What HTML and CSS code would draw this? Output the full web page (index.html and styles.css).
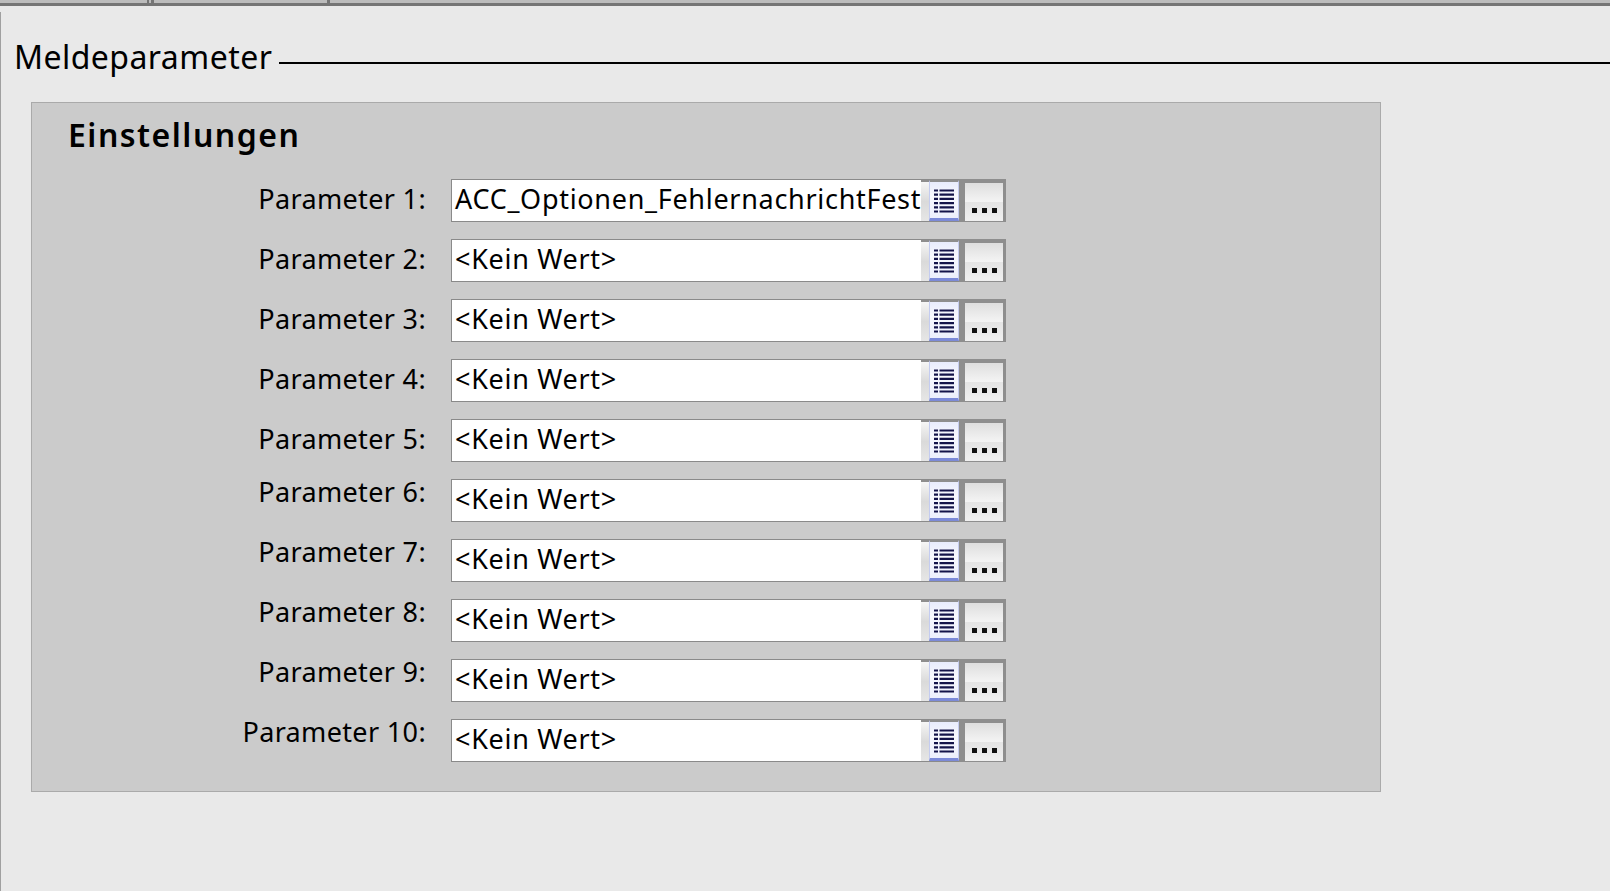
FILE: index.html
```html
<!DOCTYPE html>
<html lang="de">
<head>
    <meta charset="UTF-8">
    <title>Meldeparameter</title>
    <link rel="stylesheet" href="styles.css">
</head>
<body>
    <svg class="defs" width="0" height="0">
        <symbol id="list-icon" viewBox="0 0 20 24">
            <path d="M0 1.5h4M5.500 1.500h14.500M0 5.700h4M5.500 5.700h14.500M0 9.900h4M5.500 9.900h14.500M0 14.100h4M5.500 14.100h14.500M0 18.300h4M5.500 18.300h14.500M0 22.500h4M5.500 22.500h14.500" stroke="#14144a" stroke-width="2.200"/>
        </symbol>
    </svg>

    <div class="topbar">
        <div class="tab tab-first"></div>
        <div class="tab tab-second"></div>
    </div>
    <div class="content">
        <div class="section-title">
            <span>Meldeparameter</span>
            <div class="title-line"></div>
        </div>
        <div class="panel">
            <h2>Einstellungen</h2>
            <div class="rows">
                <div class="row">
                    <label>Parameter 1:</label>
                    <div class="field"><span class="value">ACC_Optionen_FehlernachrichtFest</span><div class="gutter"></div><div class="list-btn"><svg width="20" height="24"><use href="#list-icon"/></svg></div></div>
                    <div class="more-btn"><span></span><span></span><span></span></div>
                </div>
                <div class="row">
                    <label>Parameter 2:</label>
                    <div class="field"><span class="value">&lt;Kein Wert&gt;</span><div class="gutter"></div><div class="list-btn"><svg width="20" height="24"><use href="#list-icon"/></svg></div></div>
                    <div class="more-btn"><span></span><span></span><span></span></div>
                </div>
                <div class="row">
                    <label>Parameter 3:</label>
                    <div class="field"><span class="value">&lt;Kein Wert&gt;</span><div class="gutter"></div><div class="list-btn"><svg width="20" height="24"><use href="#list-icon"/></svg></div></div>
                    <div class="more-btn"><span></span><span></span><span></span></div>
                </div>
                <div class="row">
                    <label>Parameter 4:</label>
                    <div class="field"><span class="value">&lt;Kein Wert&gt;</span><div class="gutter"></div><div class="list-btn"><svg width="20" height="24"><use href="#list-icon"/></svg></div></div>
                    <div class="more-btn"><span></span><span></span><span></span></div>
                </div>
                <div class="row">
                    <label>Parameter 5:</label>
                    <div class="field"><span class="value">&lt;Kein Wert&gt;</span><div class="gutter"></div><div class="list-btn"><svg width="20" height="24"><use href="#list-icon"/></svg></div></div>
                    <div class="more-btn"><span></span><span></span><span></span></div>
                </div>
                <div class="row row-high">
                    <label>Parameter 6:</label>
                    <div class="field"><span class="value">&lt;Kein Wert&gt;</span><div class="gutter"></div><div class="list-btn"><svg width="20" height="24"><use href="#list-icon"/></svg></div></div>
                    <div class="more-btn"><span></span><span></span><span></span></div>
                </div>
                <div class="row row-high">
                    <label>Parameter 7:</label>
                    <div class="field"><span class="value">&lt;Kein Wert&gt;</span><div class="gutter"></div><div class="list-btn"><svg width="20" height="24"><use href="#list-icon"/></svg></div></div>
                    <div class="more-btn"><span></span><span></span><span></span></div>
                </div>
                <div class="row row-high">
                    <label>Parameter 8:</label>
                    <div class="field"><span class="value">&lt;Kein Wert&gt;</span><div class="gutter"></div><div class="list-btn"><svg width="20" height="24"><use href="#list-icon"/></svg></div></div>
                    <div class="more-btn"><span></span><span></span><span></span></div>
                </div>
                <div class="row row-high">
                    <label>Parameter 9:</label>
                    <div class="field"><span class="value">&lt;Kein Wert&gt;</span><div class="gutter"></div><div class="list-btn"><svg width="20" height="24"><use href="#list-icon"/></svg></div></div>
                    <div class="more-btn"><span></span><span></span><span></span></div>
                </div>
                <div class="row row-high">
                    <label>Parameter 10:</label>
                    <div class="field"><span class="value">&lt;Kein Wert&gt;</span><div class="gutter"></div><div class="list-btn"><svg width="20" height="24"><use href="#list-icon"/></svg></div></div>
                    <div class="more-btn"><span></span><span></span><span></span></div>
                </div>
            </div>
        </div>
    </div>
</body>
</html>
```

FILE: styles.css
```css
* {
    margin: 0;
    padding: 0;
    box-sizing: border-box;
}

html, body {
    height: 100%;
    overflow: hidden;
}

body {
    font-family: "Noto Sans", "Open Sans", sans-serif;
    background-color: #e9e9e9;
    color: #000;
}

.defs {
    display: block;
    height: 0;
}

.topbar {
    display: flex;
    height: 6px;
    background-color: #bcbcbc;
    border-bottom: 3px solid #757575;
}

.tab {
    height: 3px;
}

.tab-first {
    width: 149px;
    border-right: 2px solid #757575;
}

.tab-second {
    width: 179px;
    margin-left: 2px;
    border-left: 3px solid #757575;
    border-right: 3px solid #757575;
}

.content {
    margin-top: 6px;
    height: 879px;
    border-left: 1px solid #a0a0a0;
    padding: 22px 0 0 13px;
}

.section-title {
    display: flex;
    align-items: center;
    gap: 7px;
    height: 46px;
    font-size: 32px;
    letter-spacing: 0.45px;
    line-height: 46px;
}

.title-line {
    flex: 1;
    height: 2px;
    margin-top: 12px;
    background-color: #000;
}

.panel {
    width: 1350px;
    height: 690px;
    margin-top: 22px;
    margin-left: 17px;
    padding: 12px 0 0 36px;
    background-color: #cbcbcb;
    border: 1px solid #aaa;
}

h2 {
    font-size: 32px;
    font-weight: 600;
    letter-spacing: 1.5px;
    line-height: 40px;
}

.rows {
    display: flex;
    flex-direction: column;
    gap: 17px;
    margin-top: 24px;
}

.row {
    display: flex;
    height: 43px;
    margin-left: -36px;
}

label {
    width: 395px;
    padding-right: 1px;
    font-size: 27px;
    letter-spacing: 0.35px;
    line-height: 40px;
    text-align: right;
    white-space: nowrap;
}

.row-high label {
    line-height: 26px;
}

.field {
    display: flex;
    width: 508px;
    height: 43px;
    margin-left: 24px;
    background-color: #fff;
    border: 1px solid #8a8a8a;
    border-right: none;
}

.value {
    flex: 1;
    overflow: hidden;
    padding-left: 3px;
    font-size: 27px;
    letter-spacing: 0.7px;
    line-height: 37px;
    white-space: nowrap;
}

.gutter {
    width: 8px;
    background: linear-gradient(#f6f6f6, #dadada 50%, #e6e6e6);
    border-top: 2px solid #8e8e8e;
}

.list-btn {
    display: flex;
    justify-content: center;
    align-items: center;
    width: 30px;
    padding-top: 2px;
    background: linear-gradient(#e8ecfd, #f8f9ff 40%, #eceffc);
    border-top: 2px solid #8e8e8e;
    border-left: 1px solid #c4ccf0;
    border-right: 1px solid #c4ccf0;
    border-bottom: 3px solid #7c8ad8;
}

.more-btn {
    display: flex;
    justify-content: center;
    align-items: flex-end;
    gap: 5px;
    width: 47px;
    height: 43px;
    padding-bottom: 8px;
    background: linear-gradient(#dedede, #f4f4f4 50%, #e4e4e4 50%, #f0f0f0);
    border-style: solid;
    border-color: #8e8e8e;
    border-width: 4px 3px 1px 6px;
}

.more-btn span {
    width: 5px;
    height: 5px;
    background-color: #111;
}
```
